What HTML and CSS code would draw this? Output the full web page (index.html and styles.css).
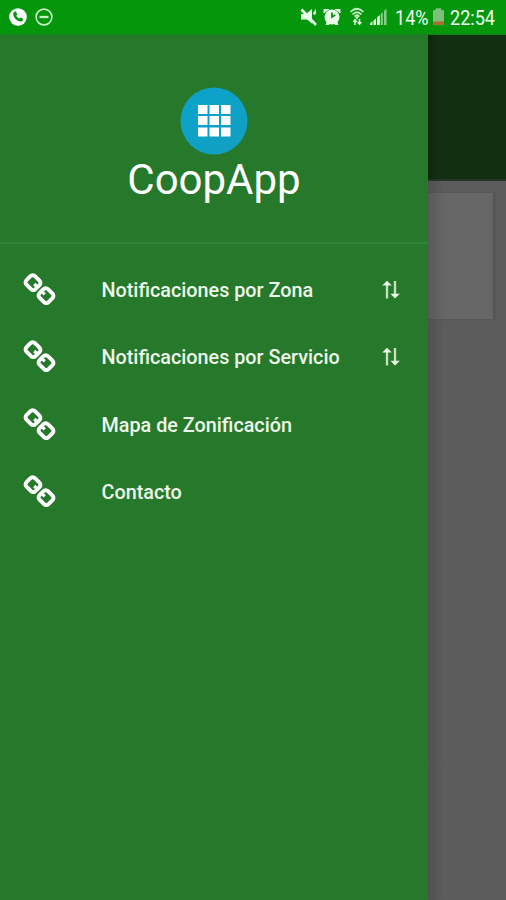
FILE: index.html
```
<!DOCTYPE html>
<html lang="es">
<head>
<meta charset="utf-8">
<title>CoopApp</title>
<link rel="stylesheet" href="styles.css">
</head>
<body>
<svg class="defs" aria-hidden="true">
  <symbol id="link" viewBox="0 0 34 34">
    <g fill="none" stroke="#fff" stroke-width="3.900">
      <rect x="-6.400" y="-6" width="12.800" height="12" rx="3.200" transform="translate(10 9.700) rotate(45)"/>
      <rect x="-6.400" y="-6" width="12.800" height="12" rx="3.200" transform="translate(23 22.700) rotate(45)"/>
      <path d="M11.300 11l2 2M19.700 19.400l2 2" stroke-width="3.200"/>
    </g>
  </symbol>
  <symbol id="sort" viewBox="0 0 20 20">
    <g fill="none" stroke="#c5e2c3" stroke-width="2.300"><path d="M6 18.500V5M14 1v13"/></g>
    <path fill="#e9f8e6" d="M6 .8l4.800 4.700H1.200zM14 18.500l-4.600-4.700h9.400z"/>
  </symbol>
</svg>
<div class="phone">
  <header class="status">
    <div class="status-left">
      <svg width="18" height="18" viewBox="0 0 18 18"><circle cx="9" cy="9" r="8.8" fill="#fff"/><path fill="#08930f" d="M5 4.1l2-.7 1.3 3-1.1 1.1c.6 1.4 1.6 2.3 3 3l1.2-1.1 2.9 1.4-.8 2.2c-1 1-3 .7-4.6-.2C6.700 11.500 5 9.500 4.400 7.200 4.100 6 4.300 4.800 5 4.100z"/></svg>
      <svg width="18" height="18" viewBox="0 0 18 18"><circle cx="9" cy="9" r="7.900" fill="none" stroke="#c9f1c9" stroke-width="1.600"/><path d="M4.500 9h9" stroke="#c9f1c9" stroke-width="2.300"/></svg>
    </div>
    <div class="status-right">
      <svg width="76" height="22" viewBox="0 0 76 22">
        <g fill="#e8ffe8">
          <path d="M1 8h5l6-5v14.500l-5-4H1zM13 7l3-4v5l-2 1z"/>
          <circle cx="32" cy="11" r="7.500"/><path d="M23.500 7.500V3h6zM40.500 7.500V3h-6zM25.500 19l1.500-4 3 3-1.500 1zM38.500 19l-1.500-4-3 3 1.500 1z"/>
        </g>
        <path d="M1.500 3.500l14.500 15.500" stroke="#e8ffe8" stroke-width="2.600"/>
        <path d="M32 6.500V11l3.200-2" fill="none" stroke="#08930f" stroke-width="1.800"/>
      </svg>
      <svg class="signals" width="42" height="22" viewBox="0 0 42 22">
        <g fill="none" stroke="#c6efc6" stroke-width="1.700"><path d="M.5 6Q7 -.5 13.500 6M2.500 8.500Q7 4 11.500 8.500M4.500 10.500Q7 8 9.500 10.500"/><path d="M5 14v5M9.500 13v5"/></g>
        <path d="M7 13.500l-2-3h4zM5 12.500l-2.500 3.500h5zM9.500 19.500L7 16h5z" fill="#e8ffe8"/>
        <path d="M20 19v-1.500l2.500-2.500V19zM23.500 14.500l2.500-2V19h-2.500zM27 11.500l2.800-2.500v10H27z" fill="#e8ffe8"/>
        <path d="M30.800 8l2-2v13h-2zM34 5l2.500-2.500V19H34z" fill="#87cf88"/>
      </svg>
      <span class="percent"><span>14%</span></span>
      <svg class="battery" width="11" height="17" viewBox="0 0 12 18"><path d="M3 0h6v2h2q1 0 1 1v14q0 1-1 1H1q-1 0-1-1V3q0-1 1-1h2z" fill="#7cc27b"/><path d="M0 14.500h12V17q0 1-1 1H1q-1 0-1-1z" fill="#b76635"/></svg>
      <span class="time"><span>22:54</span></span>
    </div>
  </header>
  <main class="body">
    <aside class="drawer">
      <div class="brand">
        <svg width="68" height="68" viewBox="0 0 68 68">
          <defs><linearGradient id="disc" x2="1" y2="1"><stop stop-color="#0aa3cc"/><stop offset="1" stop-color="#139fc0"/></linearGradient></defs>
          <circle cx="34" cy="34" r="33.500" fill="url(#disc)"/>
          <path fill="#fff" d="M18 18h9.500v9H18zM29.500 18h9.500v9h-9.500zM41 18h9.500v9H41zM18 29h9.500v9H18zM29.500 29h9.500v9h-9.500zM41 29h9.500v9H41zM18 40.500h9.500v9H18zM29.500 40.500h9.500v9h-9.500zM41 40.500h9.500v9H41z"/>
        </svg>
        <h1>CoopApp</h1>
      </div>
      <nav class="menu">
        <a class="item"><svg class="link"><use href="#link"/></svg><span class="label">Notificaciones por Zona</span><svg class="sort"><use href="#sort"/></svg></a>
        <a class="item"><svg class="link"><use href="#link"/></svg><span class="label">Notificaciones por Servicio</span><svg class="sort"><use href="#sort"/></svg></a>
        <a class="item"><svg class="link"><use href="#link"/></svg><span class="label">Mapa de Zonificación</span></a>
        <a class="item"><svg class="link"><use href="#link"/></svg><span class="label">Contacto</span></a>
      </nav>
    </aside>
    <section class="page">
      <div class="toolbar"></div>
      <div class="card"></div>
    </section>
  </main>
</div>
</body>
</html>
```

FILE: styles.css
```
* { box-sizing: border-box; }
body { margin: 0; font-family: Roboto, "Liberation Sans", sans-serif; color: #fff; }
svg { display: block; flex: none; }
.defs { position: absolute; width: 0; height: 0; }
.phone { width: 506px; height: 900px; display: flex; flex-direction: column; overflow: hidden; }
.status { height: 35px; flex: none; display: flex; justify-content: space-between; padding: 0 10px 0 9px; background: linear-gradient(#04960b 33px, #168019 35px); }
.status-left { display: flex; gap: 8px; padding-top: 8px; }
.status-right { display: flex; padding-top: 6px; color: #effff0; font-size: 21px; line-height: 24px; width: 196px; }
.status-right > svg:first-child { width: 76px; margin-right: -28px; }
.percent, .time { flex: none; white-space: nowrap; }
.percent { width: 33px; margin-left: 4px; }
.time { width: 48px; margin-left: 6px; }
.percent span, .time span { display: inline-block; transform-origin: left; transform: scaleX(.86); }
.battery { margin: 2px 0 0 5px; }
.signals { margin-left: 2px; margin-right: -1px; }
.body { flex: 1; display: flex; min-height: 0; }
.drawer { width: 428px; flex: none; background: #26782a; }
.brand { height: 209px; padding-top: 52px; border-bottom: 2px solid #30843a; display: flex; flex-direction: column; align-items: center; }
h1 { margin: 0; font-size: 42px; font-weight: 400; line-height: 50px; }
.menu { padding-top: 12px; }
.item { display: flex; align-items: center; height: 67.500px; padding: 0 27px 0 23px; }
.link { width: 34px; height: 34px; }
.label { margin-left: 44.500px; padding-top: 2px; flex: 1; font-size: 19.800px; line-height: 24px; font-weight: 500; color: #edf9ea; white-space: nowrap; }
.sort { width: 20px; height: 20px; }
.page { flex: 1; background: linear-gradient(90deg, #505050, #5c5c5c 16px); }
.toolbar { height: 146px; background: linear-gradient(90deg, #0e270f, #122f12 10px); border-bottom: 2px solid #243426; }
.card { width: 65px; height: 126px; margin-top: 12px; background: linear-gradient(90deg, #595959, #666 18px); box-shadow: 2px 0 2px #515151; }
```
